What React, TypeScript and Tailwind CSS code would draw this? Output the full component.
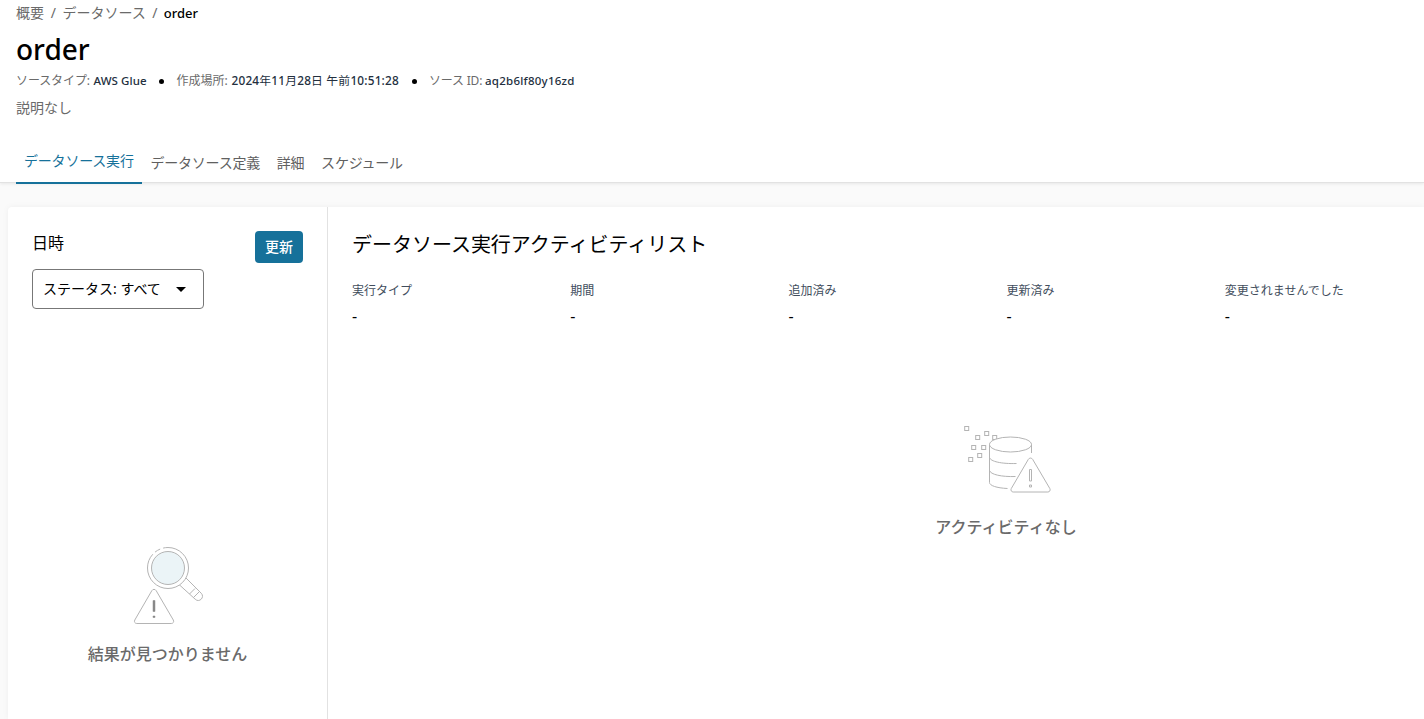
const tabs = [
  { label: "データソース実行", active: true },
  { label: "データソース定義", active: false },
  { label: "詳細", active: false },
  { label: "スケジュール", active: false },
];

const stats = ["実行タイプ", "期間", "追加済み", "更新済み", "変更されませんでした"];

const pixels = [
  [15, 12],
  [26, 21],
  [35, 17],
  [43, 21],
  [22, 31],
  [32, 31],
  [28, 39],
  [19, 43],
];

function NoActivityIcon() {
  return (
    <svg width="120" height="90" viewBox="0 0 120 90" fill="none" stroke="#b4b4b4">
      {pixels.map(([x, y]) => (
        <rect key={`${x}-${y}`} x={x - 0.3} y={y - 0.5} width="4" height="4" />
      ))}
      <ellipse cx="60.5" cy="29.5" rx="21" ry="7.5" fill="#fff" />
      <path d="M39.5 29.5v38c0 3 7 5.5 18 6M39.5 42.5c1 4 12 6.5 27 6M39.5 55.5c1 4 12 6.5 26 6M81.5 29.5V38" />
      <path
        d="M78.3 44.4 61.3 73.5c-1 1.8.2 3.5 2 3.5h34.5c1.8 0 3-1.7 2-3.5L82.7 44.4c-1-1.8-3.4-1.8-4.4 0Z"
        fill="#fff"
      />
      <path d="M79.5 54.5h2v11.5h-2zM79.5 70h2v2h-2z" />
    </svg>
  );
}

function NoResultsIcon() {
  return (
    <svg width="100" height="100" viewBox="0 0 100 100" fill="none" stroke="#b4b4b4">
      <path d="M66 43l15.2 15.2c4 4-2 10-6 6L59 49.5M69.5 59l5.5-5.5M73.5 62.5l5.5-5.5" />
      <circle cx="48" cy="33" r="20.5" fill="#fff" strokeDasharray="79 3 6 3 38" />
      <circle cx="48" cy="33" r="16.5" fill="#ebf4f7" />
      <path
        d="M31.8 55.7 14.8 85c-1 1.8.2 3.5 2 3.5h34.5c1.8 0 3-1.7 2-3.5L36.2 55.7c-1-1.8-3.4-1.8-4.4 0Z"
        fill="#fff"
      />
      <path d="M33 65.5h2v11h-2zM33 81h2v1.5h-2z" fill="#888" stroke="#888" strokeWidth="0.5" />
    </svg>
  );
}

function Header() {
  return (
    <header className="relative h-[183px] bg-white border-b border-[#e2e2e2] shadow-[0_1px_3px_rgba(0,0,0,0.08)] px-4 flex flex-col">
      <nav className="flex h-[26px] items-center text-sm leading-none text-[#6a6a6a] whitespace-pre">
        <span>概要</span>
        <span className="w-[18.5px] text-center">/</span>
        <span>データソース</span>
        <span className="w-[18px] text-center">/</span>
        <span className="pt-px font-medium text-black text-[13px]">order</span>
      </nav>
      <h1 className="h-[46px] text-[28px] leading-[46px] font-medium text-black">order</h1>
      <div className="flex h-[18px] items-center text-xs leading-none text-[#6a6a6a] whitespace-nowrap">
        <span className="w-[77.5px] tracking-[-0.1px]">ソースタイプ:</span>
        <span className="w-[65.5px] text-[11.5px] font-medium tracking-[0.1px] text-[#232f3e]">AWS Glue</span>
        <span className="size-[5px] rounded-full bg-black mr-[12.5px]" />
        <span className="w-[55px]">作成場所:</span>
        <span className="w-[180px] text-[11.8px] tracking-[0.2px] text-[#232f3e]">
          <span className="font-medium">2024</span>年<span className="font-medium">11</span>月
          <span className="font-medium">28</span>日 午前<span className="font-medium">10:51:28</span>
        </span>
        <span className="size-[5px] rounded-full bg-black mr-[12.5px]" />
        <span className="w-14 tracking-[-0.2px]">ソース ID:</span>
        <span className="text-[11.5px] font-medium tracking-[0.25px] text-[#232f3e]">aq2b6lf80y16zd</span>
      </div>
      <p className="h-[37px] text-sm leading-9 text-[#6a6a6a]">説明なし</p>
      <div className="mt-auto -mb-[2px] flex h-11 gap-[0.7px] text-sm tracking-[-0.2px] text-[#606060]">
        {tabs.map((tab) => (
          <button
            key={tab.label}
            className={
              tab.active
                ? "px-2 border-b-2 border-[#16719a] text-[#16719a] leading-[42px]"
                : "px-2 pt-[3px] border-b-2 border-transparent leading-10"
            }
          >
            {tab.label}
          </button>
        ))}
      </div>
    </header>
  );
}

export default function App() {
  return (
    <div className="flex h-[719px] flex-col overflow-hidden bg-[#fafafa] font-['Noto_Sans','Noto_Sans_CJK_JP',sans-serif]">
      <Header />
      <main className="mt-6 ml-2 flex flex-1 rounded-tl bg-white text-black shadow-[0_0_6px_rgba(0,0,0,0.05)]">
        {/* Run history */}
        <aside className="w-80 shrink-0 border-r border-[#e2e2e2] px-6 pt-6">
          <div className="flex h-8 items-start justify-between">
            <h2 className="text-base leading-6">日時</h2>
            <button className="h-8 w-12 rounded bg-[#16719a] pb-px text-sm font-medium text-white">更新</button>
          </div>
          <button className="mt-1.5 flex h-10 w-[172px] items-center rounded border border-[#777] pl-2.5 text-sm whitespace-nowrap">
            <span className="w-[133px] text-left">ステータス: すべて</span>
            <svg width="10" height="5" viewBox="0 0 10 5">
              <path d="M0 0h10L5 5z" />
            </svg>
          </button>
          <div className="mt-[226px] -ml-6 flex w-[319px] flex-col items-center">
            <div className="mr-[-5px] w-[100px]">
              <NoResultsIcon />
            </div>
            <p className="mt-[7px] text-base leading-6 font-medium text-[#6a6a6a]">結果が見つかりません</p>
          </div>
        </aside>

        {/* Activity list */}
        <section className="w-[1310px] shrink-0 pl-6 pt-6">
          <h2 className="pt-px text-xl leading-[26px] tracking-[-0.02px]">データソース実行アクティビティリスト</h2>
          <div className="mt-[23px] grid grid-cols-[repeat(5,218.2px)]">
            {stats.map((label) => (
              <div key={label}>
                <p className="text-xs leading-5 text-[#414d5c]">{label}</p>
                <p className="mt-[3px] text-base leading-6">-</p>
              </div>
            ))}
          </div>
          <div className="mt-[87px] flex w-[1308px] flex-col items-center">
            <div className="-mr-2">
              <NoActivityIcon />
            </div>
            <p className="mt-2.5 text-base leading-6 font-medium text-[#6a6a6a]">
              アクティビティなし
            </p>
          </div>
        </section>
      </main>
    </div>
  );
}
